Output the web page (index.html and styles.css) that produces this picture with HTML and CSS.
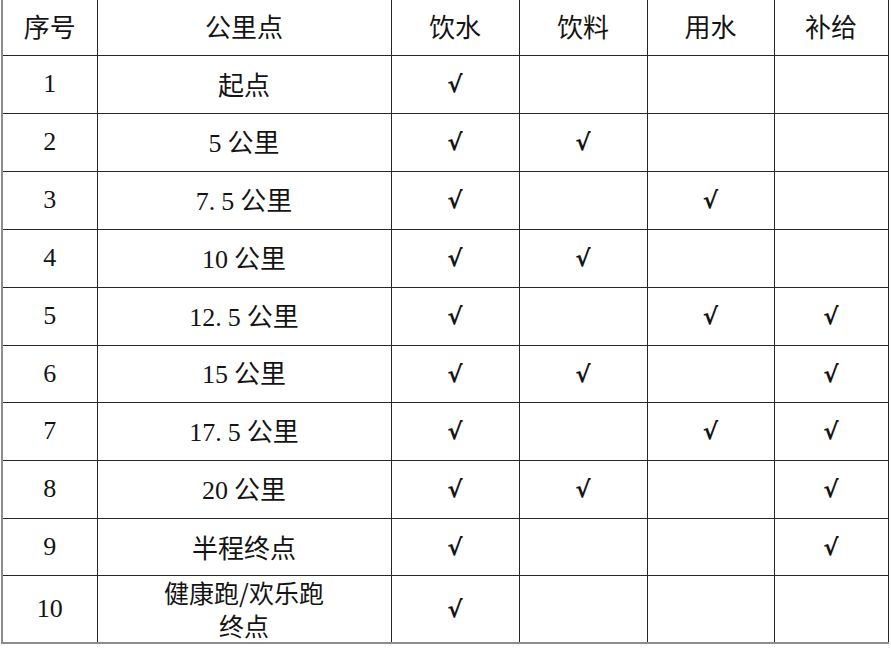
FILE: index.html
```html
<!DOCTYPE html>
<html lang="zh-CN">
<head>
<meta charset="utf-8">
<link rel="stylesheet" href="styles.css">
</head>
<body>
<table class="sheet">
  <colgroup>
    <col class="c1"><col class="c2"><col class="c3"><col class="c4"><col class="c5"><col class="c6">
  </colgroup>
  <tr class="head">
    <td>序号</td><td>公里点</td><td>饮水</td><td>饮料</td><td>用水</td><td>补给</td>
  </tr>
  <tr class="r"><td class="num">1</td><td>起点</td><td class="ck">√</td><td></td><td></td><td></td></tr>
  <tr class="r"><td class="num">2</td><td><span class="num">5</span> 公里</td><td class="ck">√</td><td class="ck">√</td><td></td><td></td></tr>
  <tr class="r"><td class="num">3</td><td><span class="num">7.<span class="sp"></span>5</span> 公里</td><td class="ck">√</td><td></td><td class="ck">√</td><td></td></tr>
  <tr class="r"><td class="num">4</td><td><span class="num">10</span> 公里</td><td class="ck">√</td><td class="ck">√</td><td></td><td></td></tr>
  <tr class="r"><td class="num">5</td><td><span class="num">12.<span class="sp"></span>5</span> 公里</td><td class="ck">√</td><td></td><td class="ck">√</td><td class="ck">√</td></tr>
  <tr class="r s"><td class="num">6</td><td><span class="num">15</span> 公里</td><td class="ck">√</td><td class="ck">√</td><td></td><td class="ck">√</td></tr>
  <tr class="r"><td class="num">7</td><td><span class="num">17.<span class="sp"></span>5</span> 公里</td><td class="ck">√</td><td></td><td class="ck">√</td><td class="ck">√</td></tr>
  <tr class="r"><td class="num">8</td><td><span class="num">20</span> 公里</td><td class="ck">√</td><td class="ck">√</td><td></td><td class="ck">√</td></tr>
  <tr class="r s"><td class="num">9</td><td>半程终点</td><td class="ck">√</td><td></td><td></td><td class="ck">√</td></tr>
  <tr class="last"><td class="num">10</td><td class="two">健康跑/欢乐跑<br>终点</td><td class="ck">√</td><td></td><td></td><td></td></tr>
</table>
</body>
</html>
```
FILE: styles.css
```css
html, body {
  margin: 0;
  padding: 0;
  background: #ffffff;
}
.sheet {
  margin-left: 1px;
  border-collapse: collapse;
  table-layout: fixed;
  width: 886px;
  font-family: "Noto Sans CJK SC", "Liberation Serif", sans-serif;
  font-size: 26px;
  color: #141414;
}
.c1 { width: 95px; }
.c2 { width: 294px; }
.c3 { width: 128px; }
.c4 { width: 128px; }
.c5 { width: 127px; }
.c6 { width: 114px; }
.sheet td {
  border: 1px solid #262626;
  padding: 0;
  text-align: center;
  vertical-align: middle;
  line-height: 30px;
}
.sheet tr.head td { border-top: none; }
.sheet td:first-child { border-left: 2px solid #8c8c8c; }
.sheet td:nth-child(4), .sheet td:nth-child(6) { border-left-color: #7a7a7a; }
.head { height: 55px; }
.sheet .head td { padding-bottom: 2px; }
.r { height: 58px; }
.r.s { height: 57px; }
.last { height: 68px; }
.sheet .last td { border-bottom: 2px solid #8c8c8c; }
.num {
  font-family: "Liberation Serif", serif;
  font-size: 26px;
}
.sp { display: inline-block; width: 6px; }
.ck {
  font-family: "DejaVu Sans", sans-serif;
  font-weight: bold;
  font-size: 23px;
}
.sheet td.two { line-height: 33px; font-size: 25px; }
```
